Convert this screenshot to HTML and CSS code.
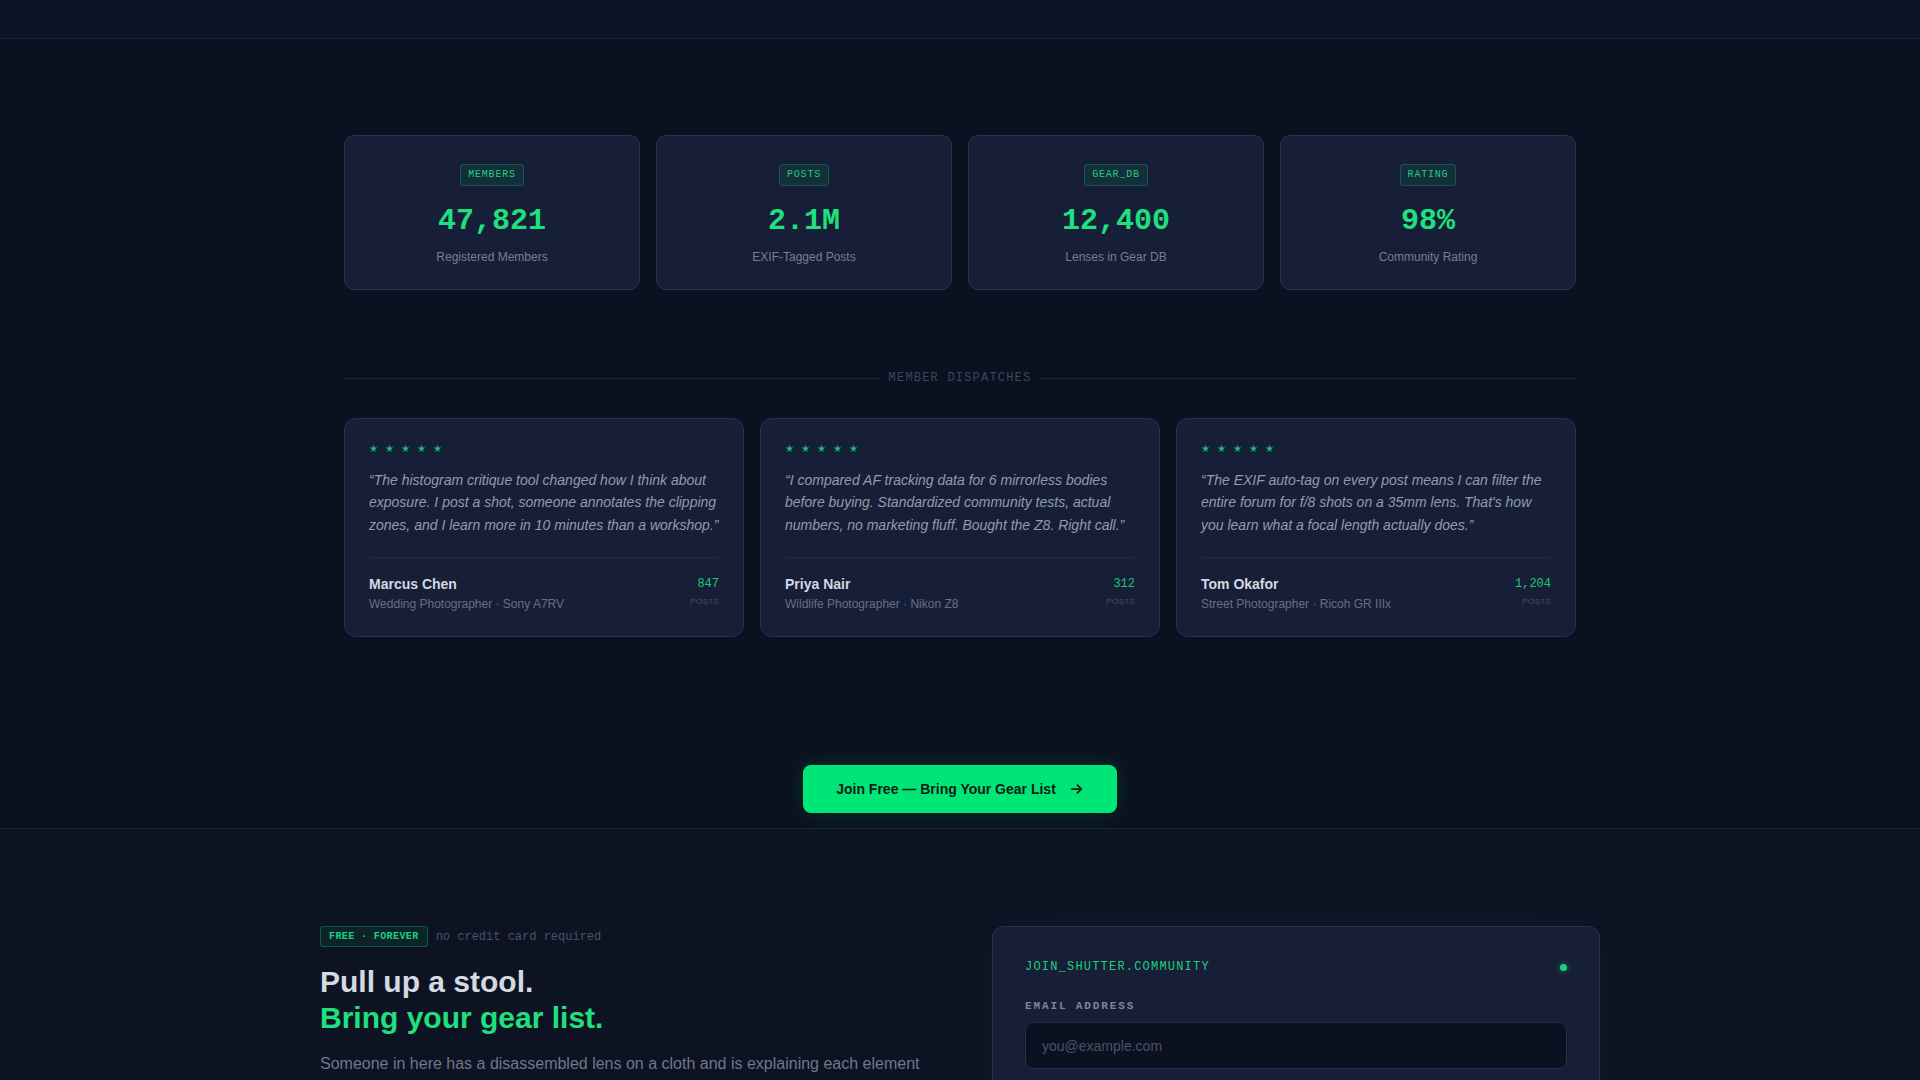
FILE: index.html
```html
<!DOCTYPE html>
<html lang="en">
<head>
<meta charset="utf-8">
<title>Shutter Community</title>
<link rel="stylesheet" href="styles.css">
</head>
<body>
<header class="topbar"></header>

<section class="proof">
  <div class="container">
    <div class="stats">
      <div class="stat-card">
        <span class="tag">MEMBERS</span>
        <div class="stat-num">47,821</div>
        <div class="stat-label">Registered Members</div>
      </div>
      <div class="stat-card">
        <span class="tag">POSTS</span>
        <div class="stat-num">2.1M</div>
        <div class="stat-label">EXIF-Tagged Posts</div>
      </div>
      <div class="stat-card">
        <span class="tag">GEAR_DB</span>
        <div class="stat-num">12,400</div>
        <div class="stat-label">Lenses in Gear DB</div>
      </div>
      <div class="stat-card">
        <span class="tag">RATING</span>
        <div class="stat-num">98%</div>
        <div class="stat-label">Community Rating</div>
      </div>
    </div>

    <div class="divider"><span>MEMBER DISPATCHES</span></div>

    <div class="quotes">
      <article class="quote-card">
        <div class="stars"><span>★</span><span>★</span><span>★</span><span>★</span><span>★</span></div>
        <p class="quote">“The histogram critique tool changed how I think about exposure. I post a shot, someone annotates the clipping zones, and I learn more in 10 minutes than a workshop.”</p>
        <div class="author">
          <div>
            <div class="author-name">Marcus Chen</div>
            <div class="author-role">Wedding Photographer · Sony A7RV</div>
          </div>
          <div class="posts">
            <div class="posts-num">847</div>
            <div class="posts-label">POSTS</div>
          </div>
        </div>
      </article>
      <article class="quote-card">
        <div class="stars"><span>★</span><span>★</span><span>★</span><span>★</span><span>★</span></div>
        <p class="quote">“I compared AF tracking data for 6 mirrorless bodies before buying. Standardized community tests, actual numbers, no marketing fluff. Bought the Z8. Right call.”</p>
        <div class="author">
          <div>
            <div class="author-name">Priya Nair</div>
            <div class="author-role">Wildlife Photographer · Nikon Z8</div>
          </div>
          <div class="posts">
            <div class="posts-num">312</div>
            <div class="posts-label">POSTS</div>
          </div>
        </div>
      </article>
      <article class="quote-card">
        <div class="stars"><span>★</span><span>★</span><span>★</span><span>★</span><span>★</span></div>
        <p class="quote">“The EXIF auto-tag on every post means I can filter the entire forum for f/8 shots on a 35mm lens. That's how you learn what a focal length actually does.”</p>
        <div class="author">
          <div>
            <div class="author-name">Tom Okafor</div>
            <div class="author-role">Street Photographer · Ricoh GR IIIx</div>
          </div>
          <div class="posts">
            <div class="posts-num">1,204</div>
            <div class="posts-label">POSTS</div>
          </div>
        </div>
      </article>
    </div>

    <div class="cta-row">
      <a class="cta" href="#join">Join Free — Bring Your Gear List
        <svg class="cta-icon" viewBox="0 0 16 16" width="14" height="14" aria-hidden="true"><path d="M2 8h11M8.5 3.5L13 8l-4.5 4.5" fill="none" stroke="currentColor" stroke-width="2" stroke-linecap="round" stroke-linejoin="round"/></svg>
      </a>
    </div>
  </div>
</section>

<section class="join" id="join">
  <div class="join-grid">
    <div class="join-copy">
      <div class="join-meta">
        <span class="free-tag">FREE · FOREVER</span>
        <span class="meta-note">no credit card required</span>
      </div>
      <h2 class="join-title">Pull up a stool.<br><span class="accent">Bring your gear list.</span></h2>
      <p class="join-text">Someone in here has a disassembled lens on a cloth and is explaining each element to a room of people who actually want to know. Come sit down.</p>
    </div>
    <form class="join-card">
      <div class="join-head">
        <span class="join-host">JOIN_SHUTTER.COMMUNITY</span>
        <span class="status-dot"></span>
      </div>
      <label class="field-label" for="email">EMAIL ADDRESS</label>
      <input class="field-input" id="email" type="email" placeholder="you@example.com">
      <button class="join-btn" type="button">Create Account</button>
    </form>
  </div>
</section>
</body>
</html>
```

FILE: styles.css
```css
* { box-sizing: border-box; }

body {
  margin: 0;
  background: #0b1120;
  font-family: "Liberation Sans", Arial, sans-serif;
  color: #d1d5db;
}

.topbar {
  height: 39px;
  background: #0e1425;
  border-bottom: 1px solid #1b2337;
}

.proof {
  padding: 96px 0 15px;
  border-bottom: 1px solid #1a2235;
}

.container {
  max-width: 1232px;
  margin: 0 auto;
}

/* stats */
.stats {
  display: grid;
  grid-template-columns: repeat(4, 1fr);
  gap: 16px;
}

.stat-card {
  background: #161f37;
  border: 1px solid #29334c;
  border-radius: 10px;
  padding: 28px 24px 23px;
  display: flex;
  flex-direction: column;
  align-items: center;
}

.tag {
  font-family: "Liberation Mono", monospace;
  font-size: 10px;
  line-height: 14px;
  letter-spacing: 0.08em;
  color: #1fcf7c;
  background: rgba(0, 230, 118, 0.08);
  border: 1px solid rgba(0, 230, 118, 0.25);
  border-radius: 4px;
  padding: 3px 7px;
}

.stat-num {
  margin-top: 16px;
  font-family: "Liberation Mono", monospace;
  font-weight: 700;
  font-size: 30px;
  line-height: 38px;
  color: #1fe07e;
}

.stat-label {
  margin-top: 8px;
  font-size: 12px;
  line-height: 18px;
  color: #767e92;
}

/* divider */
.divider {
  margin-top: 80px;
  display: flex;
  align-items: center;
  gap: 10px;
}

.divider::before,
.divider::after {
  content: "";
  flex: 1;
  height: 1px;
  background: #1e263a;
}

.divider span {
  font-family: "Liberation Mono", monospace;
  font-size: 12px;
  line-height: 16px;
  letter-spacing: 0.1em;
  color: #3d465b;
}

/* testimonials */
.quotes {
  margin-top: 32px;
  display: grid;
  grid-template-columns: repeat(3, 1fr);
  gap: 16px;
}

.quote-card {
  background: #161f37;
  border: 1px solid #29334c;
  border-radius: 12px;
  padding: 24px 24px 23px;
  display: flex;
  flex-direction: column;
}

.stars {
  display: flex;
  gap: 7px;
  font-family: "DejaVu Sans", sans-serif;
  font-size: 10px;
  line-height: 12px;
  color: #1dbb78;
}

.quote {
  margin: 14px 0 0;
  font-size: 14px;
  line-height: 22.4px;
  font-style: italic;
  color: #939bad;
}

.author {
  margin-top: 21px;
  padding-top: 16px;
  border-top: 1px solid #222b42;
  display: flex;
  justify-content: space-between;
  align-items: flex-start;
}

.author-name {
  font-size: 14px;
  line-height: 20px;
  font-weight: 700;
  color: #d4d8e0;
}

.author-role {
  margin-top: 1px;
  font-size: 12px;
  line-height: 18px;
  color: #667085;
}

.posts {
  text-align: right;
}

.posts-num {
  font-family: "Liberation Mono", monospace;
  font-size: 12px;
  line-height: 20px;
  color: #1ec878;
}

.posts-label {
  margin-top: 2px;
  font-size: 8px;
  line-height: 12px;
  letter-spacing: 0.04em;
  color: #475066;
}

/* cta */
.cta-row {
  margin-top: 128px;
  display: flex;
  justify-content: center;
}

.cta {
  display: inline-flex;
  align-items: center;
  gap: 14px;
  height: 48px;
  padding: 0 33px;
  background: #00e676;
  color: #0b1a17;
  font-size: 14px;
  font-weight: 700;
  text-decoration: none;
  border-radius: 8px;
  box-shadow: 0 0 24px rgba(0, 230, 118, 0.15);
}

.cta-icon {
  display: block;
}

/* join */
.join {
  background: #0d1323;
  padding: 97px 0 60px;
}

.join-grid {
  max-width: 1280px;
  margin: 0 auto;
  display: grid;
  grid-template-columns: 1fr 1fr;
  gap: 64px;
  align-items: start;
}

.join-meta {
  display: flex;
  align-items: center;
  gap: 8px;
}

.free-tag {
  font-family: "Liberation Mono", monospace;
  font-size: 10px;
  line-height: 13px;
  font-weight: 700;
  letter-spacing: 0.04em;
  color: #1fcf7c;
  background: rgba(0, 230, 118, 0.08);
  border: 1px solid rgba(0, 230, 118, 0.3);
  border-radius: 3px;
  padding: 3px 8px;
}

.meta-note {
  font-family: "Liberation Mono", monospace;
  font-size: 12px;
  color: #4a5266;
}

.join-title {
  margin: 17px 0 0;
  font-size: 30px;
  line-height: 36px;
  font-weight: 700;
  color: #d5d9e1;
}

.accent {
  color: #1fe07e;
}

.join-text {
  margin: 15px 0 0;
  max-width: 620px;
  font-size: 16px;
  line-height: 26px;
  color: #6f778b;
}

.join-card {
  background: #161f37;
  border: 1px solid #29334c;
  border-radius: 12px;
  padding: 32px;
  box-shadow: 0 0 60px rgba(0, 200, 140, 0.05);
  display: flex;
  flex-direction: column;
}

.join-head {
  display: flex;
  justify-content: space-between;
  align-items: center;
}

.join-host {
  font-family: "Liberation Mono", monospace;
  font-size: 12px;
  line-height: 16px;
  letter-spacing: 0.1em;
  color: #1fcf7c;
}

.status-dot {
  width: 7px;
  height: 7px;
  border-radius: 50%;
  background: #1fd17c;
  box-shadow: 0 0 6px rgba(0, 230, 118, 0.5);
}

.field-label {
  margin-top: 23px;
  font-family: "Liberation Mono", monospace;
  font-size: 11px;
  line-height: 16px;
  font-weight: 700;
  letter-spacing: 0.17em;
  color: #7d8598;
}

.field-input {
  margin-top: 8px;
  height: 47px;
  width: 100%;
  background: #0b1120;
  border: 1px solid #243049;
  border-radius: 8px;
  padding: 0 16px;
  font-family: "Liberation Sans", Arial, sans-serif;
  font-size: 14px;
  color: #d1d5db;
  outline: none;
}

.field-input::placeholder {
  color: #4a5265;
}

.join-btn {
  margin-top: 16px;
  height: 48px;
  border: 0;
  border-radius: 8px;
  background: #00e676;
  color: #0b1a17;
  font-family: "Liberation Sans", Arial, sans-serif;
  font-size: 14px;
  font-weight: 700;
}
```
